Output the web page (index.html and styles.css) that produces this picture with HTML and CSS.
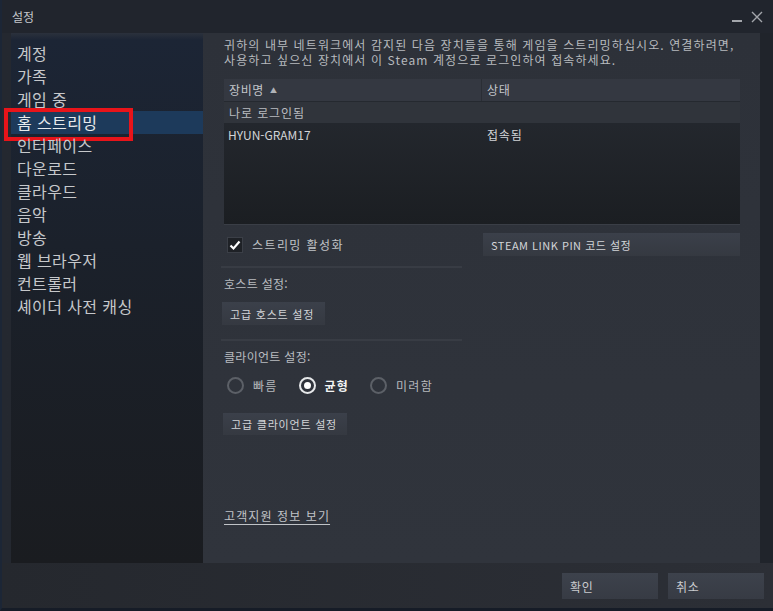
FILE: index.html
```html
<!DOCTYPE html>
<html lang="ko">
<head>
<meta charset="utf-8">
<title>설정</title>
<link rel="stylesheet" href="styles.css">
</head>
<body>
<div class="window">
  <div class="titlebar">
    <span class="title">설정</span>
    <div class="controls">
      <span class="min"></span>
      <svg class="close" width="12" height="12" viewBox="0 0 12 12"><path d="M1 1 L11 11 M11 1 L1 11" stroke="#a3a6ab" stroke-width="1.4" fill="none"/></svg>
    </div>
  </div>
  <div class="main">
    <nav class="sidebar">
      <div class="item">계정</div>
      <div class="item">가족</div>
      <div class="item">게임 중</div>
      <div class="item selected">홈 스트리밍<span class="highlight"></span></div>
      <div class="item">인터페이스</div>
      <div class="item">다운로드</div>
      <div class="item">클라우드</div>
      <div class="item">음악</div>
      <div class="item">방송</div>
      <div class="item">웹 브라우저</div>
      <div class="item">컨트롤러</div>
      <div class="item">셰이더 사전 캐싱</div>
    </nav>
    <section class="content">
      <p class="desc"><span class="line">귀하의 내부 네트워크에서 감지된 다음 장치들을 통해 게임을 스트리밍하십시오. 연결하려면,</span><span class="line">사용하고 싶으신 장치에서 이 Steam 계정으로 로그인하여 접속하세요.</span></p>
      <div class="table">
        <div class="thead">
          <div class="th th-name">장비명 <span class="arrow">▲</span></div>
          <div class="th th-state">상태</div>
        </div>
        <div class="group-row">나로 로그인됨</div>
        <div class="row">
          <div class="cell-name">HYUN-GRAM17</div>
          <div class="cell-state">접속됨</div>
        </div>
      </div>
      <div class="enable-row">
        <label class="check">
          <span class="box"><svg width="12" height="12" viewBox="0 0 12 12"><path d="M1.5 6.5 L4.5 9.5 L10.5 2.5" stroke="#ffffff" stroke-width="2.2" fill="none"/></svg></span>
          <span class="check-label">스트리밍 활성화</span>
        </label>
        <button class="btn btn-wide">STEAM LINK PIN 코드 설정</button>
      </div>
      <div class="sep"></div>
      <div class="label">호스트 설정:</div>
      <button class="btn btn-host">고급 호스트 설정</button>
      <div class="sep sep2"></div>
      <div class="label">클라이언트 설정:</div>
      <div class="radios">
        <span class="radio"><span class="circle"></span><span class="rlabel">빠름</span></span>
        <span class="radio on"><span class="circle"></span><span class="rlabel">균형</span></span>
        <span class="radio"><span class="circle"></span><span class="rlabel">미려함</span></span>
      </div>
      <button class="btn btn-client">고급 클라이언트 설정</button>
      <a class="link" href="#">고객지원 정보 보기</a>
    </section>
    <div class="gutter"></div>
  </div>
  <div class="footer">
    <button class="fbtn">확인</button>
    <button class="fbtn">취소</button>
  </div>
</div>
</body>
</html>
```
FILE: styles.css
```css
* { box-sizing: border-box; }
html, body {
  margin: 0;
  padding: 0;
  background: #1b1f26;
  font-family: "Noto Sans CJK KR", "Liberation Sans", sans-serif;
}
.window {
  width: 773px;
  height: 611px;
  display: flex;
  flex-direction: column;
  background: linear-gradient(90deg, #242830 0%, #2a2d34 100%);
  border-left: 2px solid #1c2636;
  border-bottom: 3px solid #161c27;
  overflow: hidden;
}
.titlebar {
  height: 33px;
  flex: 0 0 33px;
  display: flex;
  align-items: center;
  justify-content: space-between;
  padding: 0 10px 0 10px;
  background: #21252d;
}
.title {
  color: #c4c7cb;
  font-size: 12px;
  margin-top: -1px;
}
.controls {
  display: flex;
  align-items: center;
  gap: 9px;
  margin-top: 1px;
}
.min {
  display: block;
  width: 10px;
  height: 2px;
  background: #a3a6ab;
  margin-top: 8px;
}
.main {
  flex: 0 0 530px;
  display: flex;
  padding-left: 9px;
}
.sidebar {
  width: 192px;
  flex: 0 0 192px;
  padding-top: 9px;
  background: linear-gradient(180deg, #2b313c 0px, #1c2535 7px, #1b212b 40%, #1a1c20 100%);
}
.item {
  position: relative;
  height: 23px;
  line-height: 23px;
  padding-left: 6px;
  font-size: 16px;
  letter-spacing: 0.4px;
  color: #c6c8cb;
  white-space: nowrap;
}
.item.selected {
  background: #1d3a5b;
  color: #e8eaec;
}
.highlight {
  position: absolute;
  left: -7px;
  top: -3px;
  width: 129px;
  height: 33px;
  border: 4px solid #e8141a;
}
.content {
  flex: 1;
  padding: 4px 20px 0 21px;
  background: linear-gradient(180deg, #2d3139 0%, #30343c 100%);
  display: flex;
  flex-direction: column;
  align-items: flex-start;
}
.gutter {
  width: 13px;
  flex: 0 0 13px;
  background: #20242b;
}
.desc {
  margin: 0;
  font-size: 12px;
  letter-spacing: 1.1px;
  color: #b7babe;
  white-space: nowrap;
}
.line {
  display: block;
  height: 15px;
  line-height: 15px;
}
.table {
  margin-top: 12px;
  width: 516px;
  height: 146px;
  background: linear-gradient(180deg, #272b32 0%, #1b1e22 100%);
  border-bottom: 1px solid #3a3e46;
}
.thead {
  display: flex;
  height: 22px;
  background: #343841;
  margin-bottom: 1px;
}
.th {
  font-size: 12px;
  line-height: 22px;
  letter-spacing: 0.6px;
  color: #c3c6ca;
}
.th-name {
  width: 258px;
  padding-left: 5px;
  border-right: 1px solid #2a2e35;
}
.th-state {
  padding-left: 5px;
}
.arrow {
  font-size: 7px;
  vertical-align: 2px;
  margin-left: 2px;
  color: #b0b3b8;
}
.group-row {
  height: 21px;
  line-height: 21px;
  padding-left: 5px;
  font-size: 12px;
  letter-spacing: 0.9px;
  color: #b9bcc0;
  background: #30343b;
}
.row {
  display: flex;
  height: 21px;
  line-height: 21px;
  margin-top: 1px;
  font-size: 12px;
  color: #d2d4d7;
}
.cell-name {
  width: 259px;
  padding-left: 4px;
}
.cell-state {
  padding-left: 4px;
  letter-spacing: 0.8px;
}
.enable-row {
  margin-top: 8px;
  width: 516px;
  display: flex;
  justify-content: space-between;
  align-items: center;
}
.check {
  display: flex;
  align-items: center;
  padding-left: 3px;
}
.box {
  width: 16px;
  height: 16px;
  background: #1e2126;
  border: 1px solid #3b3f47;
  display: flex;
  align-items: center;
  justify-content: center;
}
.check-label {
  margin-left: 9px;
  font-size: 12px;
  letter-spacing: 1.4px;
  color: #c0c3c7;
}
.btn {
  font-family: inherit;
  border: none;
  background: linear-gradient(180deg, #3b404a 0%, #353941 100%);
  color: #d3d5d8;
  font-size: 11px;
  letter-spacing: 0.8px;
  text-align: left;
  height: 23px;
  padding: 0 8px;
  cursor: pointer;
}
.btn-wide {
  width: 257px;
  letter-spacing: 0.5px;
}
.sep {
  margin-top: 10px;
  margin-left: -3px;
  width: 241px;
  height: 2px;
  background: #383c44;
}
.sep2 {
  margin-top: 14px;
}
.label {
  margin-top: 8px;
  font-size: 12px;
  line-height: 16px;
  letter-spacing: 0.3px;
  color: #b9bcc0;
}
.btn-host {
  margin-top: 10px;
  margin-left: -2px;
  width: 103px;
}
.radios {
  margin-top: 11px;
  display: flex;
  align-items: center;
  padding-left: 3px;
  height: 18px;
}
.radio {
  display: flex;
  align-items: center;
  width: 71.5px;
}
.circle {
  width: 17px;
  height: 17px;
  flex: 0 0 17px;
  border: 2px solid #5c6067;
  border-radius: 50%;
  display: flex;
  align-items: center;
  justify-content: center;
}
.radio.on .circle {
  border-color: #e6e8ea;
}
.radio.on .circle::after {
  content: "";
  width: 7px;
  height: 7px;
  border-radius: 50%;
  background: #ffffff;
}
.rlabel {
  margin-left: 9px;
  font-size: 12px;
  letter-spacing: 1.3px;
  color: #b6b9bd;
  white-space: nowrap;
}
.radio.on .rlabel {
  color: #f2f3f4;
  font-weight: 700;
}
.btn-client {
  margin-top: 19px;
  margin-left: -1px;
  width: 124px;
  height: 22px;
}
.link {
  margin-top: 72px;
  font-size: 12px;
  letter-spacing: 1.1px;
  color: #c0c3c7;
  text-decoration: underline;
  text-underline-offset: 3px;
}
.footer {
  flex: 1;
  display: flex;
  justify-content: flex-end;
  gap: 10px;
  padding: 10px 9px 0 0;
  background: linear-gradient(90deg, #25282e 0%, #2c2f36 100%);
}
.fbtn {
  font-family: inherit;
  width: 96px;
  height: 26px;
  border: none;
  background: linear-gradient(180deg, #3d424c 0%, #373b44 100%);
  color: #c9cbce;
  font-size: 12px;
  letter-spacing: 0.6px;
  text-align: left;
  padding: 0 8px;
}
```
